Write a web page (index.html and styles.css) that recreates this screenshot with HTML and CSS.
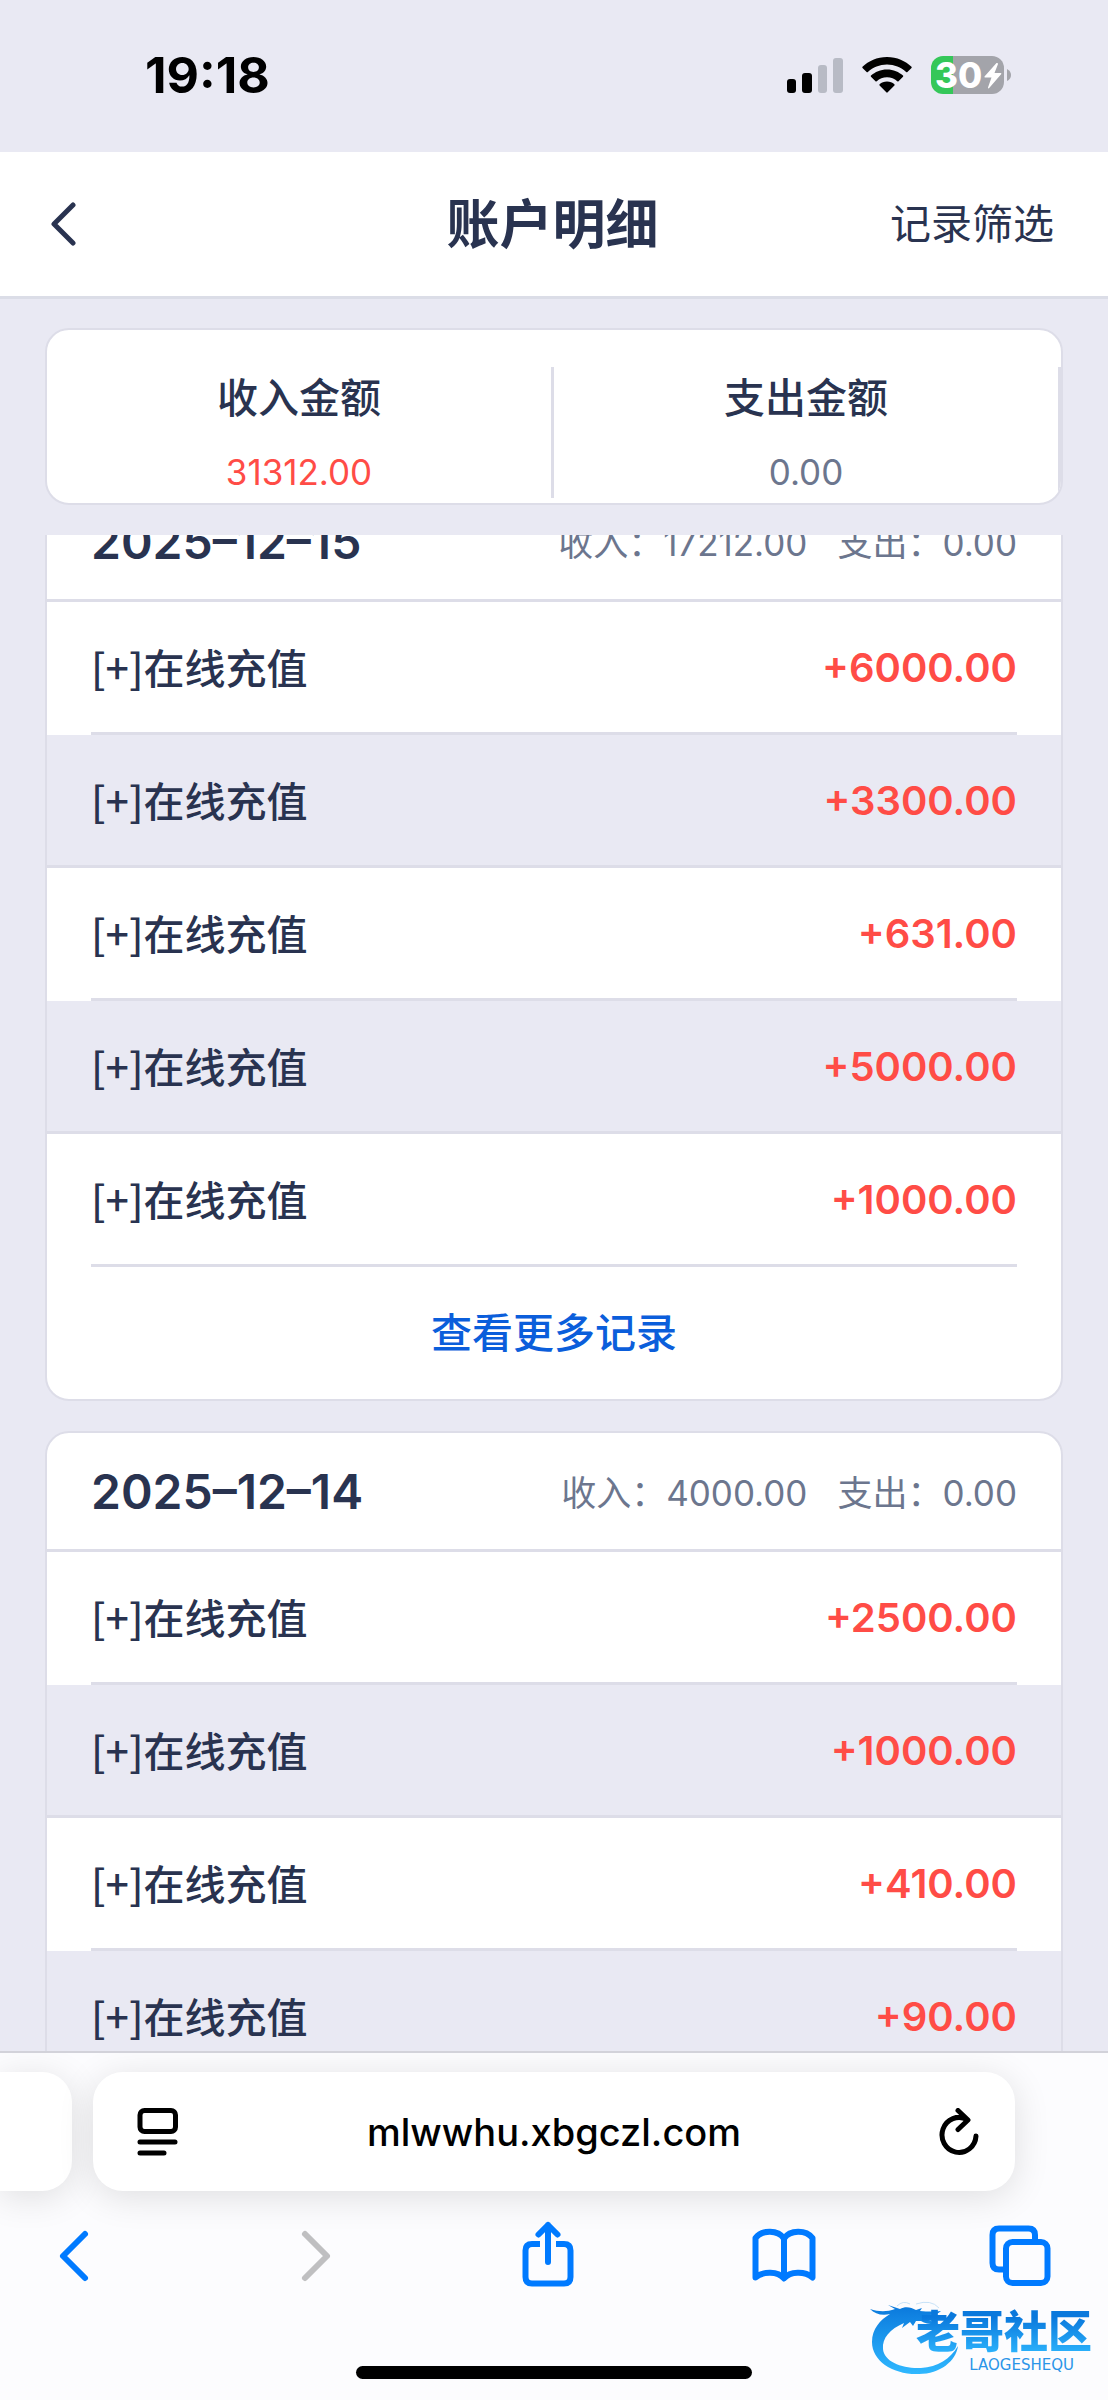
FILE: index.html
```html
<!DOCTYPE html>
<html lang="zh-CN">
<head>
<meta charset="utf-8">
<meta name="viewport" content="width=device-width, initial-scale=1">
<title>账户明细</title>
<link rel="stylesheet" href="styles.css">
</head>
<body>
<div class="status">
  <span class="time">19:18</span>
  <div class="status-icons">
    <svg width="56" height="36" viewBox="0 0 56 36" aria-hidden="true">
      <rect x="0" y="22" width="9" height="14" rx="3"/>
      <rect x="15" y="16" width="10" height="20" rx="3"/>
      <rect x="31" y="8" width="9" height="28" rx="3" fill="#b8bbc5"/>
      <rect x="46" y="1" width="10" height="35" rx="3" fill="#b8bbc5"/>
    </svg>
    <svg width="50" height="36" viewBox="0 0 50 36" aria-hidden="true">
      <path d="M25 0C15 0 6.500 4 .5 9.800Q0 10.400.5 11L4.600 15Q5.200 15.600 5.900 15C11 10.300 17.600 7.500 25 7.500S39 10.300 44.100 15Q44.800 15.600 45.400 15L49.500 11Q50 10.400 49.500 9.800C43.500 4 35 0 25 0Z"/>
      <path d="M25 12.500C18.500 12.500 13 15 9 18.600Q8.400 19.200 9 19.800L13.500 24.200Q14 24.700 14.700 24.200C17.500 21.700 21 20.200 25 20.200S32.500 21.700 35.300 24.200Q36 24.700 36.500 24.200L41 19.800Q41.600 19.200 41 18.600C37 15 31.500 12.500 25 12.500Z"/>
      <path d="M25 24.600C22 24.600 19.500 25.700 17.600 27.300Q17 28 17.600 28.600L24.300 35.300Q25 36 25.700 35.300L32.400 28.600Q33 28 32.400 27.300C30.500 25.700 28 24.600 25 24.600Z"/>
    </svg>
    <svg class="battery" width="80" height="38" viewBox="0 0 80 38" role="img" aria-label="30%">
      <path d="M12 0H22V38H12A12 12 0 0 1 0 26V12A12 12 0 0 1 12 0Z" fill="#35c759"/>
      <path d="M22 0H61A12 12 0 0 1 73 12V26A12 12 0 0 1 61 38H22Z" fill="#a3a4aa"/>
      <path d="M76 13Q80 15 80 19T76 25Z" fill="#a3a4aa"/>
      <text x="4" y="32" class="battery-text">30</text>
      <path d="M65.500 7L53.500 20.500Q53 21.500 54.200 21.500H60.500L57 31.500Q57 33 58.200 32L70.300 18Q70.600 17 69.600 17H63.500L67 8Q67 6.500 65.500 7Z" fill="#fff"/>
    </svg>
  </div>
</div>

<header class="header">
  <button class="back" type="button" aria-label="返回">
    <svg width="26" height="44" viewBox="0 0 26 44" aria-hidden="true"><path d="M22 3L3 22L22 41" fill="none" stroke="#293350" stroke-width="5" stroke-linecap="round" stroke-linejoin="round"/></svg>
  </button>
  <h1 class="title">账户明细</h1>
  <button class="filter" type="button">记录筛选</button>
</header>

<section class="summary">
  <div class="total">
    <h2 class="total-name">收入金额</h2>
    <p class="total-value income">31312.00</p>
  </div>
  <div class="total">
    <h2 class="total-name">支出金额</h2>
    <p class="total-value">0.00</p>
  </div>
</section>

<main class="scroll">
  <div class="days">
    <section class="day">
      <div class="day-head">
        <h2 class="date">2025–12–15</h2>
        <p class="sums"><span>收入：17212.00</span><span>支出：0.00</span></p>
      </div>
      <ul class="records">
        <li class="record"><div class="line"><span class="kind">[+]在线充值</span><span class="amount">+6000.00</span></div></li>
        <li class="record"><div class="line"><span class="kind">[+]在线充值</span><span class="amount">+3300.00</span></div></li>
        <li class="record"><div class="line"><span class="kind">[+]在线充值</span><span class="amount">+631.00</span></div></li>
        <li class="record"><div class="line"><span class="kind">[+]在线充值</span><span class="amount">+5000.00</span></div></li>
        <li class="record"><div class="line"><span class="kind">[+]在线充值</span><span class="amount">+1000.00</span></div></li>
      </ul>
      <a class="more" href="#more">查看更多记录</a>
    </section>
    <section class="day">
      <div class="day-head">
        <h2 class="date">2025–12–14</h2>
        <p class="sums"><span>收入：4000.00</span><span>支出：0.00</span></p>
      </div>
      <ul class="records">
        <li class="record"><div class="line"><span class="kind">[+]在线充值</span><span class="amount">+2500.00</span></div></li>
        <li class="record"><div class="line"><span class="kind">[+]在线充值</span><span class="amount">+1000.00</span></div></li>
        <li class="record"><div class="line"><span class="kind">[+]在线充值</span><span class="amount">+410.00</span></div></li>
        <li class="record"><div class="line"><span class="kind">[+]在线充值</span><span class="amount">+90.00</span></div></li>
      </ul>
    </section>
  </div>
</main>

<footer class="browser">
  <div class="tabs">
    <div class="prev-tab"></div>
    <div class="address">
      <button class="address-button" type="button" aria-label="页面菜单">
        <svg width="42" height="48" viewBox="0 0 42 48" fill="none" stroke="#000" stroke-width="5" stroke-linecap="round" aria-hidden="true">
          <rect x="3" y="2.500" width="35.500" height="21" rx="4.500"/><path d="M3 34H38M3 45H27"/>
        </svg>
      </button>
      <input class="url" type="text" value="mlwwhu.xbgczl.com" aria-label="网址">
      <button class="address-button" type="button" aria-label="刷新">
        <svg width="40" height="48" viewBox="0 0 40 48" fill="none" stroke="#000" stroke-width="5" stroke-linecap="round" stroke-linejoin="round" aria-hidden="true">
          <path d="M37 28A17 17.500 0 1 1 28 11.500M19 2.500L29 12L19 21.500"/>
        </svg>
      </button>
    </div>
  </div>
  <nav class="toolbar">
    <button class="tool" type="button" aria-label="后退">
      <svg width="80" height="80" viewBox="0 0 80 80" aria-hidden="true"><path d="M51 19L29 41L51 63"/></svg>
    </button>
    <button class="tool tool-off" type="button" aria-label="前进" disabled>
      <svg width="80" height="80" viewBox="0 0 80 80" aria-hidden="true"><path d="M34 19L56 41L34 63"/></svg>
    </button>
    <button class="tool" type="button" aria-label="分享">
      <svg width="80" height="80" viewBox="0 0 80 80" aria-hidden="true"><path d="M33 29H25Q18.500 29 18.500 35.500V62Q18.500 68.500 25 68.500H57Q63.500 68.500 63.500 62V35.500Q63.500 29 57 29H49" stroke-linecap="butt"/><path d="M41 47V10M31.500 19.500L41 10L50.500 19.500"/></svg>
    </button>
    <button class="tool" type="button" aria-label="书签">
      <svg width="80" height="80" viewBox="0 0 80 80" aria-hidden="true"><path d="M40 23.500C34 14.500 18 14.500 11.500 23V62.500C19 56 34 56 40 63.500C46 56 61 56 68.500 62.500V23C62 14.500 46 14.500 40 23.500ZM40 23.500V63"/></svg>
    </button>
    <button class="tool" type="button" aria-label="标签页">
      <svg width="80" height="80" viewBox="0 0 80 80" aria-hidden="true"><path d="M55 26V20Q55 13.500 48.500 13.500H19Q12.500 13.500 12.500 20V48Q12.500 54.500 19 54.500H26" stroke-linecap="butt"/><rect x="26" y="27" width="41.500" height="41" rx="6.500"/></svg>
    </button>
  </nav>
  <div class="home"></div>
  <div class="mark">
    <svg class="dragon" width="92" height="76" viewBox="0 0 92 76" aria-hidden="true">
      <defs><linearGradient id="sky" x1="0" y1="0" x2="0" y2="1"><stop offset="0" stop-color="#0a78dc"/><stop offset="1" stop-color="#2fb8ff"/></linearGradient></defs>
      <path fill="url(#sky)" d="M0 10C9 13 17 13 25 10L18 6L30 10C35 7 41 8 46 11L52 9L50 12Q62 13 71 12Q67 16 60 16L71 19Q64 22 56 20L68 25Q58 26 51 22L46 22L43 27L40 23L32 29L34 24C20 30 12 39 13 50C14 63 33 70 51 69C68 68 80 60 88 47C86 62 70 75 49 75C23 76 2 62 2 43C2 30 10 21 20 15C12 17 5 15 0 10Z"/>
      <path fill="none" stroke="#c7e2f8" stroke-width="1" d="M27 7Q33 1 40 5M46 5Q61 0 69 9"/>
    </svg>
    <div class="mark-text"><strong class="mark-name">老哥社区</strong><small class="mark-latin">LAOGESHEQU</small></div>
  </div>
</footer>
</body>
</html>
```
FILE: styles.css
```css
* { box-sizing: border-box; }

body {
  margin: 0;
  height: 100vh;
  display: flex;
  flex-direction: column;
  background: #e9e9f3;
  color: #293350;
  font-family: Inter, "Noto Sans CJK SC", sans-serif;
  font-size: 41px;
}

h1, h2, p, ul { margin: 0; padding: 0; }
ul { list-style: none; }
button {
  border: 0;
  padding: 0;
  background: none;
  color: inherit;
  font: inherit;
}
svg { display: block; }

.status {
  flex: none;
  display: flex;
  justify-content: space-between;
  align-items: center;
  height: 152px;
  padding: 0 97px 3px 145px;
  color: #000;
}
.time { font-size: 50px; font-weight: 700; }
.status-icons { display: flex; align-items: center; gap: 19px; }
.battery-text {
  fill: #fff;
  font-size: 35px;
  font-weight: 800;
}

.header {
  flex: none;
  display: grid;
  grid-template-columns: 1fr auto 1fr;
  align-items: center;
  height: 147px;
  padding: 0 54px 0 51px;
  background: #fff;
  border-bottom: 3px solid #dbdde7;
}
.back { justify-self: start; }
.title, .filter { padding-bottom: 6px; }
.title { font-size: 53px; font-weight: 700; }
.filter { justify-self: end; }

.summary {
  flex: none;
  display: flex;
  height: 177px;
  margin: 29px 45px 30px;
  padding: 37px 0 5px;
  overflow: hidden;
  background: #fff;
  border: 2px solid #dddde8;
  border-radius: 24px;
}
.total {
  flex: 1;
  border-right: 3px solid #dddde8;
  text-align: center;
}
.total-name { font-size: 41px; font-weight: 500; line-height: 62px; }
.total-value {
  margin-top: 18px;
  font-size: 35px;
  line-height: 50px;
  color: #6c768e;
}
.total .income, .amount { color: #ff4c46; }

.scroll {
  flex: 1;
  min-height: 0;
  padding: 0 45px;
  overflow: hidden;
}
/* The list is scrolled part of the way into the first day. */
.days {
  display: flex;
  flex-direction: column;
  gap: 30px;
  margin-top: -54px;
}
.day {
  overflow: hidden;
  background: #fff;
  border: 2px solid #dddde8;
  border-radius: 24px;
}
.day-head {
  display: flex;
  justify-content: space-between;
  align-items: center;
  height: 119px;
  padding: 0 44px;
  border-bottom: 3px solid #dddde8;
}
.date { font-size: 48px; font-weight: 600; }
.sums {
  display: flex;
  gap: 30px;
  padding-bottom: 2px;
  font-size: 35px;
  color: #6c768e;
}
.record { padding: 0 44px; }
.line {
  display: flex;
  justify-content: space-between;
  align-items: center;
  height: 133px;
  border-bottom: 3px solid #dddde8;
}
.record:nth-child(even) { padding: 0; background: #e9e9f3; }
.record:nth-child(even) .line { padding: 0 44px; }
.kind {
  padding-bottom: 2px;
  font-family: "Noto Sans CJK SC", sans-serif;
  font-weight: 500;
}
.amount { font-size: 40px; font-weight: 600; }
.more {
  display: block;
  line-height: 132px;
  text-align: center;
  text-decoration: none;
  font-weight: 500;
  color: #0b5edb;
}

.browser {
  position: relative;
  flex: none;
  padding: 19px 0 21px;
  overflow: hidden;
  background: #fcfcfe;
  border-top: 2px solid #d2d2da;
}
.tabs {
  display: flex;
  gap: 21px;
  height: 119px;
  padding-right: 93px;
}
.prev-tab, .address {
  background: #fff;
  box-shadow: 0 6px 36px rgba(0, 0, 0, 0.12);
}
.prev-tab { width: 72px; border-radius: 0 30px 30px 0; }
.address {
  flex: 1;
  display: flex;
  align-items: center;
  min-width: 0;
  padding: 0 36px;
  border-radius: 30px;
}
.address-button {
  flex: none;
  display: flex;
  justify-content: flex-end;
  width: 50px;
}
.url {
  flex: 1;
  min-width: 0;
  border: 0;
  padding: 0;
  background: none;
  color: #000;
  font: 500 38px Inter, sans-serif;
  text-align: center;
}
.toolbar {
  display: flex;
  justify-content: space-between;
  margin-top: 24px;
  padding: 0 48px 0 34px;
}
.tool { color: #007aff; }
.tool-off { color: #bfbfc1; }
.tool path, .tool rect {
  fill: none;
  stroke: currentColor;
  stroke-width: 6;
  stroke-linecap: round;
  stroke-linejoin: round;
}
.tool [stroke-linecap="butt"] { stroke-linecap: butt; }
.home {
  width: 396px;
  height: 13px;
  margin: 71px auto 0;
  background: #000;
  border-radius: 7px;
}
.mark {
  position: absolute;
  right: 16px;
  bottom: 25px;
  width: 222px;
  height: 76px;
}
.mark-text {
  position: absolute;
  right: 0;
  bottom: 2px;
  display: flex;
  flex-direction: column;
  align-items: flex-end;
}
.mark-name {
  font-size: 44px;
  font-weight: 900;
  line-height: 50px;
  color: transparent;
  background: linear-gradient(#0a78dc 20%, #2fb8ff);
  background-clip: text;
  -webkit-background-clip: text;
}
.mark-latin {
  padding-right: 18px;
  font: 15px/16px "DejaVu Sans", sans-serif;
  color: #2a95e8;
}
```
